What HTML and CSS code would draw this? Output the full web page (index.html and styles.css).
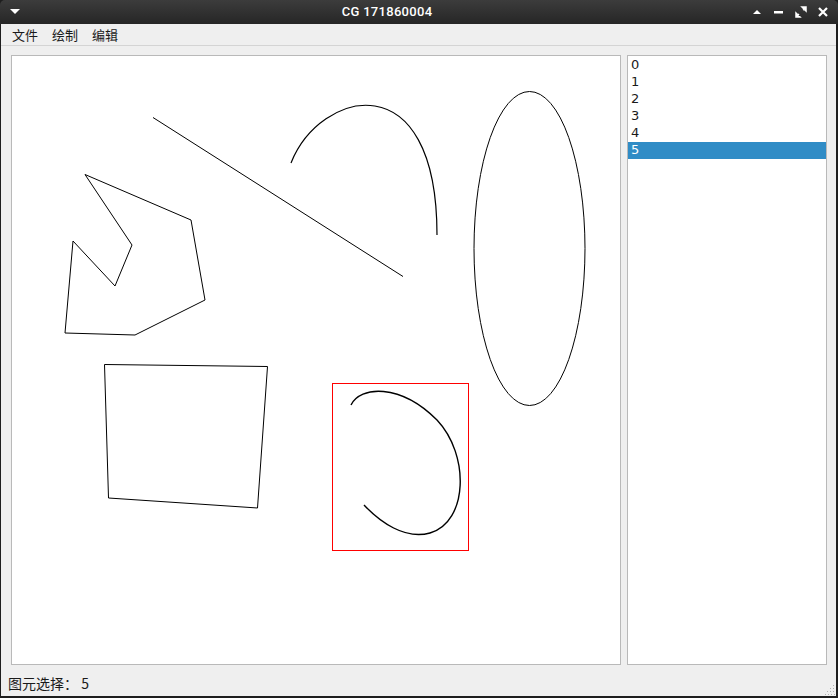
FILE: index.html
```html
<!DOCTYPE html>
<html>
<head>
<meta charset="utf-8">
<link rel="stylesheet" href="styles.css">
</head>
<body>
<div class="window">
  <div class="titlebar">
    <div class="tb-left">
      <svg width="10" height="6" viewBox="0 0 10 6"><path d="M0 0 L10 0 L5 5 Z" fill="#fff"/></svg>
    </div>
    <div class="title">CG 171860004</div>
    <div class="tb-buttons">
      <svg width="12" height="10" viewBox="0 0 12 10"><path d="M2 7 L6 3 L10 7 Z" fill="#fff"/></svg>
      <svg width="12" height="10" viewBox="0 0 12 10"><rect x="1" y="4" width="9" height="2.5" fill="#fff"/></svg>
      <svg width="12" height="12" viewBox="0 0 12 12"><path d="M7 1 H11 V5 Z M11 1 L8 4 M1 11 V7 L5 11 Z M1 11 L4 8" fill="#fff" stroke="#fff" stroke-width="1.5"/></svg>
      <svg width="12" height="12" viewBox="0 0 12 12"><path d="M2 2 L10 10 M10 2 L2 10" stroke="#fff" stroke-width="2.2"/></svg>
    </div>
  </div>
  <div class="body">
    <div class="menubar">
      <span class="menu-item">文件</span>
      <span class="menu-item">绘制</span>
      <span class="menu-item">编辑</span>
    </div>
    <div class="main">
      <div class="canvas">
        <svg width="608" height="608" viewBox="12 56 608 608">
          <g fill="none" stroke="#000" stroke-width="1">
            <line x1="153" y1="117.5" x2="403" y2="276.5"/>
            <path d="M291 163 C320 90 437 60 437 235" stroke-width="1.2"/>
            <ellipse cx="529.5" cy="248.5" rx="55.5" ry="157"/>
            <polygon points="85,174.5 191,220 205,300 135,335 65,333 73,241 115,286 132,245"/>
            <polygon points="104.5,364.5 267.5,366.5 257.5,508 108.5,498"/>
            <path d="M351 405 C360 386 400 383 437 420 C470 455 468 522 430 533 C405 540 380 522 364 505" stroke-width="1.4"/>
            <rect x="332.5" y="383.5" width="136" height="167" stroke="#ff0000"/>
          </g>
        </svg>
      </div>
      <div class="list">
        <div class="row">0</div>
        <div class="row">1</div>
        <div class="row">2</div>
        <div class="row">3</div>
        <div class="row">4</div>
        <div class="row selected">5</div>
      </div>
    </div>
    <div class="status">
      <span>图元选择： 5</span>
      <svg class="grip" width="10" height="10" viewBox="0 0 10 10" fill="#b0b0b0">
        <rect x="8" y="0" width="1" height="1"/>
        <rect x="5" y="3" width="1" height="1"/><rect x="8" y="3" width="1" height="1"/>
        <rect x="2" y="6" width="1" height="1"/><rect x="5" y="6" width="1" height="1"/><rect x="8" y="6" width="1" height="1"/>
        <rect x="0" y="9" width="1" height="1"/><rect x="3" y="9" width="1" height="1"/><rect x="6" y="9" width="1" height="1"/><rect x="9" y="9" width="1" height="1"/>
      </svg>
    </div>
  </div>
</div>
</body>
</html>
```
FILE: styles.css
```css
* { box-sizing: border-box; }
html, body { margin: 0; padding: 0; background: #1e1e1e; }
.window {
  width: 838px;
  height: 698px;
  background: #1e1e1e;
  display: flex;
  flex-direction: column;
  padding: 0 2px 2px 1px;
  border-radius: 5px 5px 0 0;
  overflow: hidden;
}
.titlebar {
  height: 24px;
  flex: none;
  display: flex;
  align-items: center;
  background: linear-gradient(#3c3c3c, #262626);
  color: #fff;
  margin: 0 -2px 0 -1px;
}
.tb-left { width: 28px; padding-left: 10px; display: flex; }
.title {
  flex: 1;
  line-height: 26px;
  text-align: center;
  font-family: Roboto, "DejaVu Sans", sans-serif;
  font-weight: 500;
  font-size: 13px;
  letter-spacing: 0.3px;
}
.tb-buttons {
  width: 92px;
  padding-right: 9px;
  display: flex;
  justify-content: flex-end;
  gap: 10px;
  align-items: center;
}
.body {
  flex: 1;
  background: #efefef;
  display: flex;
  flex-direction: column;
}
.menubar {
  height: 22px;
  border-bottom: 1px solid #d4d4d4;
  display: flex;
  align-items: center;
  padding-left: 11px;
  gap: 12px;
  font-family: "Noto Sans CJK SC", sans-serif;
  font-size: 13px;
  color: #1a1a1a;
}
.menu-item { width: 28px; line-height: 22px; }
.main {
  display: flex;
  gap: 6px;
  padding: 9px 0 0 10px;
}
.canvas {
  width: 610px;
  height: 610px;
  background: #fff;
  border: 1px solid #b9b9b9;
}
.canvas svg { display: block; }
.list {
  width: 200px;
  height: 610px;
  background: #fff;
  border: 1px solid #b9b9b9;
  padding-top: 1px;
  font-family: "DejaVu Sans", sans-serif;
  font-size: 13px;
  color: #1a1a1a;
}
.row {
  height: 17px;
  line-height: 16px;
  padding-left: 3px;
}
.row.selected {
  background: #308cc6;
  color: #fff;
}
.status {
  flex: 1;
  position: relative;
  display: flex;
  align-items: center;
  padding: 4px 0 0 7px;
  font-family: "Noto Sans CJK SC", "DejaVu Sans", sans-serif;
  font-size: 14px;
  color: #1a1a1a;
}
.grip { position: absolute; right: 1px; bottom: 1px; }
```
